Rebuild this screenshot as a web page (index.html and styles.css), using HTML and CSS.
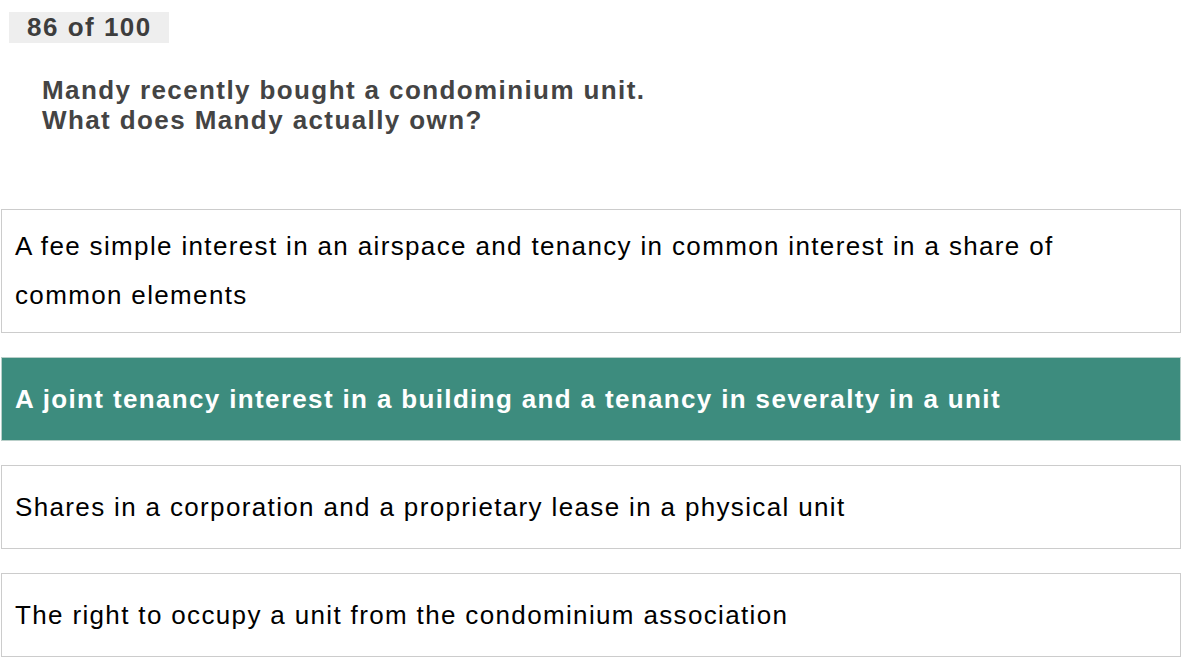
FILE: index.html
```html
<!DOCTYPE html>
<html>
<head>
<meta charset="utf-8">
<link rel="stylesheet" href="styles.css">
</head>
<body>
<div class="page">
  <div class="counter">86 of 100</div>
  <div class="question">Mandy recently bought a condominium unit.<br>What does Mandy actually own?</div>
  <div class="answers">
    <div class="answer">A fee simple interest in an airspace and tenancy in common interest in a share of common elements</div>
    <div class="answer selected">A joint tenancy interest in a building and a tenancy in severalty in a unit</div>
    <div class="answer">Shares in a corporation and a proprietary lease in a physical unit</div>
    <div class="answer">The right to occupy a unit from the condominium association</div>
  </div>
</div>
</body>
</html>
```

FILE: styles.css
```css
html, body {
  margin: 0;
  padding: 0;
  background: #fff;
}
body {
  font-family: "Liberation Sans", Arial, Helvetica, sans-serif;
}
.page {
  padding: 12px 19px 0 1px;
}
.counter {
  display: inline-block;
  margin-left: 8px;
  width: 160px;
  height: 31px;
  box-sizing: border-box;
  padding-left: 18px;
  background: #eeeeee;
  color: #3d3d3d;
  font-weight: bold;
  font-size: 26px;
  letter-spacing: 1.5px;
  line-height: 31px;
}
.question {
  margin: 32px 0 0 41px;
  color: #444;
  font-weight: bold;
  font-size: 26px;
  letter-spacing: 1.4px;
  line-height: 30px;
}
.answers {
  margin-top: 74px;
  display: flex;
  flex-direction: column;
  gap: 24px;
}
.answer {
  width: 1180px;
  box-sizing: border-box;
  min-height: 84px;
  display: flex;
  align-items: center;
  padding: 12px 80px 12px 13px;
  border: 1px solid #cccccc;
  color: #000;
  font-size: 26px;
  letter-spacing: 1.35px;
  line-height: 49px;
}
.answer.selected {
  background: #3d8c7e;
  border-color: #b9cfc9;
  color: #fff;
  font-weight: bold;
}
```
